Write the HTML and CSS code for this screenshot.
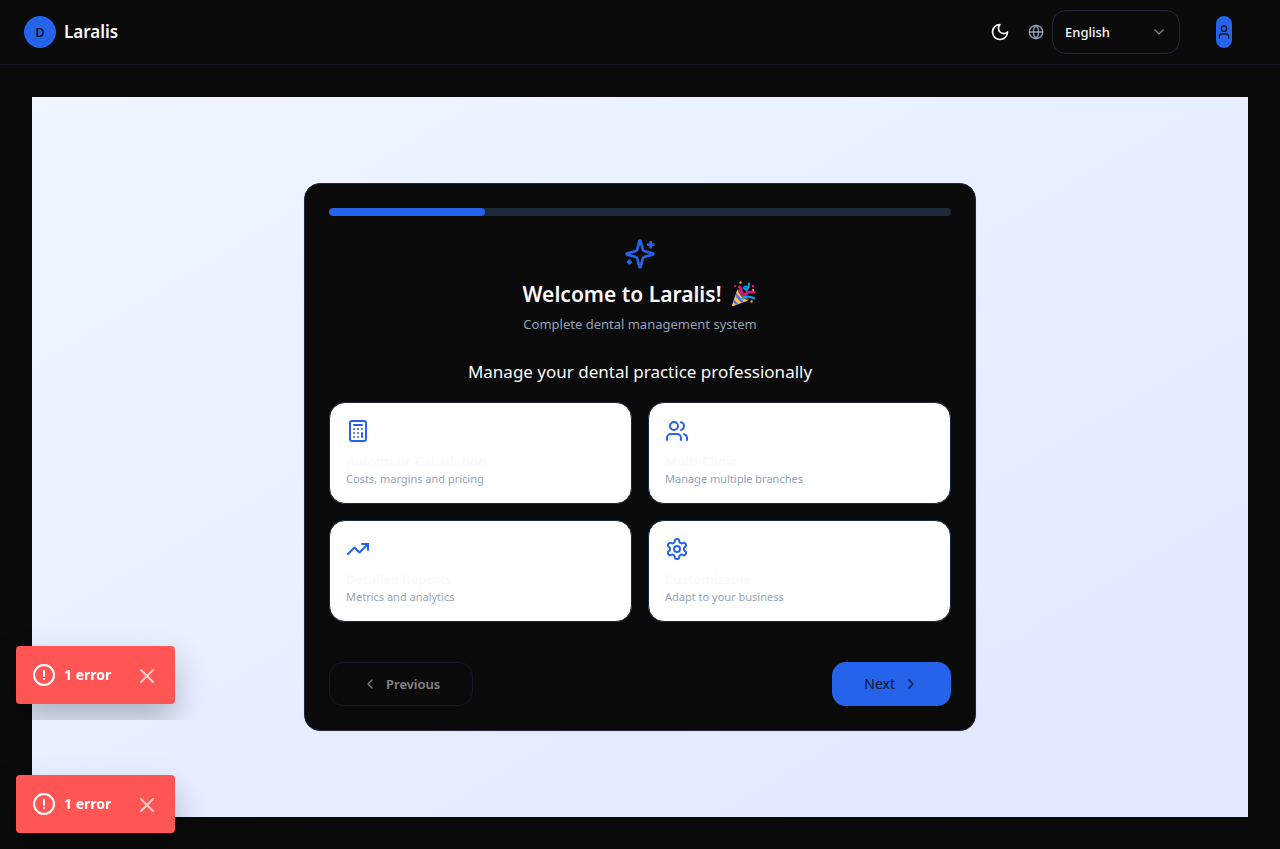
FILE: index.html
```html
<!DOCTYPE html>
<html lang="en">
<head>
<meta charset="utf-8">
<meta name="viewport" content="width=device-width, initial-scale=1">
<title>Laralis</title>
<link rel="stylesheet" href="styles.css">
</head>
<body>
<header class="topbar">
  <div class="brand">
    <span class="brand-mark">D</span>
    <span class="brand-name">Laralis</span>
  </div>
  <div class="tools">
    <button class="theme-toggle" type="button" aria-label="Toggle theme">
      <svg class="icon icon-sm" viewBox="0 0 24 24"><path d="M12 3a6 6 0 0 0 9 9 9 9 0 1 1-9-9Z"/></svg>
    </button>
    <div class="language">
      <svg class="icon globe" viewBox="0 0 24 24"><circle cx="12" cy="12" r="10"/><path d="M12 2a14.5 14.5 0 0 0 0 20 14.5 14.5 0 0 0 0-20"/><path d="M2 12h20"/></svg>
      <div class="select-wrap">
        <select class="select" aria-label="Language"><option>English</option><option>Español</option></select>
        <svg class="icon chevron" viewBox="0 0 24 24"><path d="m6 9 6 6 6-6"/></svg>
      </div>
    </div>
    <button class="avatar" type="button" aria-label="Account">
      <svg class="icon" viewBox="0 0 24 24"><path d="M19 21v-2a4 4 0 0 0-4-4H9a4 4 0 0 0-4 4v2"/><circle cx="12" cy="7" r="4"/></svg>
    </button>
  </div>
</header>

<main class="page">
  <div class="stage">
    <section class="wizard">
      <div class="progress" role="progressbar" aria-label="Setup progress" aria-valuenow="25" aria-valuemin="0" aria-valuemax="100"><div class="progress-bar" style="width:25%"></div></div>
      <div class="intro">
        <svg class="icon icon-lg" viewBox="0 0 24 24"><path d="M9.937 15.5A2 2 0 0 0 8.5 14.063l-6.135-1.582a.5.5 0 0 1 0-.962L8.5 9.936A2 2 0 0 0 9.937 8.5l1.582-6.135a.5.5 0 0 1 .963 0L14.063 8.5A2 2 0 0 0 15.5 9.937l6.135 1.581a.5.5 0 0 1 0 .964L15.5 14.063a2 2 0 0 0-1.437 1.437l-1.582 6.135a.5.5 0 0 1-.963 0z"/><path d="M20 3v4"/><path d="M22 5h-4"/><path d="M4 17v2"/><path d="M5 18H3"/></svg>
        <h1 class="title">Welcome to Laralis!
          <svg class="party" viewBox="0 0 26 26" role="img" aria-label="Party popper">
            <path d="M7 8c4 1 9 5 11 11l-4 2L5 12z" fill="#7d4533"/>
            <path d="M6.500 8.500 1 24c0 1 .6 1.300 1.500 1L17 19.500C12 18 8 14 6.500 8.500z" fill="#ffc83d"/>
            <path d="m5.200 12 7.800 9-2.600 1-6.300-7zM3 18.500l4.500 4.700-2.500.900-3-3.300z" fill="#5b6cf0"/>
            <path d="M7.500 5.500c3 1 3.500 4 2.500 8" fill="none" stroke="#f70a8d" stroke-width="2.400"/>
            <path d="M18.500 1.500c-1 1.500 0 3-1 5-1 2.500-4 2.500-4.500.5-.3-2 3-2.500 3.300 0 .2 1.500-.5 2.500-1.500 3.500" fill="none" stroke="#00a6ed" stroke-width="1.800"/>
            <path d="M13.500 14.500c2-3 5-5 11-2.500" fill="none" stroke="#f70a8d" stroke-width="2.200"/>
            <path d="M11 18c3-4 8-2.500 13-.500" fill="none" stroke="#00a6ed" stroke-width="2.400"/>
            <g fill="#ffb02e"><circle cx="9.500" cy="1.500" r="1.200"/><circle cx="22" cy="9" r="1.100"/><circle cx="20.500" cy="20.500" r="1.200"/></g>
            <g fill="#f70a8d"><circle cx="4" cy="5" r="1"/><circle cx="22" cy="5" r="1.200"/></g>
          </svg>
        </h1>
        <p class="subtitle">Complete dental management system</p>
      </div>
      <h2 class="lead">Manage your dental practice professionally</h2>
      <div class="features">
        <article class="feature">
          <svg class="icon icon-md" viewBox="0 0 24 24"><rect width="16" height="20" x="4" y="2" rx="2"/><path d="M8 6h8M16 14v4M16 10h.01M12 10h.01M8 10h.01M12 14h.01M8 14h.01M12 18h.01M8 18h.01"/></svg>
          <h3 class="feature-name">Automatic Calculation</h3>
          <p class="feature-text">Costs, margins and pricing</p>
        </article>
        <article class="feature">
          <svg class="icon icon-md" viewBox="0 0 24 24"><path d="M16 21v-2a4 4 0 0 0-4-4H6a4 4 0 0 0-4 4v2"/><circle cx="9" cy="7" r="4"/><path d="M22 21v-2a4 4 0 0 0-3-3.870M16 3.130a4 4 0 0 1 0 7.750"/></svg>
          <h3 class="feature-name">Multi-Clinic</h3>
          <p class="feature-text">Manage multiple branches</p>
        </article>
        <article class="feature">
          <svg class="icon icon-md" viewBox="0 0 24 24"><path d="m22 7-8.500 8.500-5-5L2 17"/><path d="M16 7h6v6"/></svg>
          <h3 class="feature-name">Detailed Reports</h3>
          <p class="feature-text">Metrics and analytics</p>
        </article>
        <article class="feature">
          <svg class="icon icon-md" viewBox="0 0 24 24"><path d="M12.220 2h-.440a2 2 0 0 0-2 2v.180a2 2 0 0 1-1 1.730l-.430.250a2 2 0 0 1-2 0l-.150-.080a2 2 0 0 0-2.730.730l-.220.380a2 2 0 0 0 .730 2.730l.150.100a2 2 0 0 1 1 1.720v.510a2 2 0 0 1-1 1.740l-.150.090a2 2 0 0 0-.730 2.730l.220.380a2 2 0 0 0 2.730.730l.150-.080a2 2 0 0 1 2 0l.430.250a2 2 0 0 1 1 1.730V20a2 2 0 0 0 2 2h.440a2 2 0 0 0 2-2v-.180a2 2 0 0 1 1-1.730l.430-.250a2 2 0 0 1 2 0l.150.080a2 2 0 0 0 2.730-.730l.220-.390a2 2 0 0 0-.730-2.730l-.150-.080a2 2 0 0 1-1-1.740v-.500a2 2 0 0 1 1-1.740l.150-.090a2 2 0 0 0 .730-2.730l-.220-.380a2 2 0 0 0-2.730-.730l-.150.080a2 2 0 0 1-2 0l-.430-.250a2 2 0 0 1-1-1.730V4a2 2 0 0 0-2-2z"/><circle cx="12" cy="12" r="3"/></svg>
          <h3 class="feature-name">Customizable</h3>
          <p class="feature-text">Adapt to your business</p>
        </article>
      </div>
      <div class="actions">
        <button class="btn btn-outline" type="button" disabled><svg class="icon" viewBox="0 0 24 24"><path d="m15 18-6-6 6-6"/></svg>Previous</button>
        <button class="btn btn-primary" type="button">Next<svg class="icon" viewBox="0 0 24 24"><path d="m9 18 6-6-6-6"/></svg></button>
      </div>
    </section>
  </div>
</main>

<div class="toast-layer toast-layer-clipped">
  <div class="toast" role="alert">
    <svg class="icon icon-alert" viewBox="0 0 24 24"><circle cx="12" cy="12" r="10"/><path d="M12 8v5M12 16h.01"/></svg>
    <span class="toast-text">1 error</span>
    <button class="toast-close" type="button" aria-label="Close"><svg class="icon" viewBox="0 0 24 24"><path d="M6 7l12 12M18 7 6 19"/></svg></button>
  </div>
</div>
<div class="toast-layer">
  <div class="toast" role="alert">
    <svg class="icon icon-alert" viewBox="0 0 24 24"><circle cx="12" cy="12" r="10"/><path d="M12 8v5M12 16h.01"/></svg>
    <span class="toast-text">1 error</span>
    <button class="toast-close" type="button" aria-label="Close"><svg class="icon" viewBox="0 0 24 24"><path d="M6 7l12 12M18 7 6 19"/></svg></button>
  </div>
</div>
</body>
</html>
```
FILE: styles.css
```css
* { box-sizing: border-box; }
body {
  margin: 0;
  min-height: 100vh;
  background: #0a0a0a;
  color: #fafafa;
  font-family: "Noto Sans", "Open Sans", sans-serif;
  font-size: 13px;
  line-height: 20px;
}
h1, h2, h3, p { margin: 0; }
button, select { font: inherit; color: inherit; }
button { border: 0; padding: 0; background: none; }

.icon {
  display: block;
  flex: none;
  width: 16px;
  height: 16px;
  fill: none;
  stroke: currentColor;
  stroke-width: 2;
  stroke-linecap: round;
  stroke-linejoin: round;
}
.icon-sm { width: 20px; height: 20px; }
.icon-md { width: 24px; height: 24px; color: #2563eb; }
.icon-lg { width: 32px; height: 32px; color: #2563eb; }

.topbar {
  display: flex;
  align-items: center;
  justify-content: space-between;
  height: 65px;
  padding: 0 48px 0 24px;
  border-bottom: 1px solid #131a26;
}
.brand { display: flex; align-items: center; gap: 8px; }
.brand-mark {
  display: grid;
  place-items: center;
  width: 32px;
  height: 32px;
  border-radius: 50%;
  background: #2563eb;
  color: #0f172a;
  font-weight: 600;
}
.brand-name { font-size: 17px; line-height: 24px; font-weight: 600; }
.tools { display: flex; align-items: center; }
.theme-toggle { margin-right: 18px; }
.language { display: flex; align-items: center; gap: 8px; margin-right: 36px; }
.globe { color: #94a3b8; }
.select-wrap { position: relative; }
.select {
  display: block;
  width: 128px;
  height: 44px;
  padding: 0 12px;
  border: 1px solid #1e293b;
  border-radius: 14px;
  background: #0a0a0a;
  font-weight: 500;
  appearance: none;
}
.chevron { position: absolute; top: 14px; right: 13px; opacity: .5; pointer-events: none; }
.avatar {
  display: grid;
  place-items: center;
  width: 16px;
  height: 32px;
  border-radius: 8px;
  background: #2563eb;
  color: #0f172a;
}

.page { padding: 32px; }
.stage {
  display: grid;
  place-items: center;
  min-height: 720px;
  padding: 16px;
  background: linear-gradient(to bottom right, #eff6ff, #e0e7ff);
}
.wizard {
  width: 100%;
  max-width: 672px;
  padding: 24px;
  border: 1px solid #1e293b;
  border-radius: 16px;
  background: #0a0a0a;
  box-shadow: 0 1px 2px rgba(0, 0, 0, .05);
}
.progress { height: 8px; border-radius: 4px; background: #1e293b; overflow: hidden; }
.progress-bar { height: 100%; border-radius: 4px; background: #2563eb; }
.intro {
  display: flex;
  flex-direction: column;
  align-items: center;
  padding-top: 22px;
  text-align: center;
}
.title {
  display: flex;
  align-items: center;
  gap: 10px;
  margin-top: 8px;
  font-size: 21px;
  line-height: 32px;
  font-weight: 600;
}
.party { width: 26px; height: 26px; }
.subtitle { margin-top: 4px; color: #94a3b8; }
.lead {
  margin-top: 24px;
  text-align: center;
  font-size: 17px;
  line-height: 28px;
  font-weight: 400;
}
.features {
  display: grid;
  grid-template-columns: 1fr 1fr;
  gap: 16px;
  margin-top: 16px;
}
.feature {
  padding: 16px;
  border: 1px solid #1e293b;
  border-radius: 16px;
  background: #fff;
}
.feature-name { margin-top: 8px; color: #fafafa; font-size: 13px; font-weight: 600; }
.feature-text { color: #94a3b8; font-size: 11px; line-height: 16px; }
.actions { display: flex; justify-content: space-between; margin-top: 40px; }
.btn {
  display: flex;
  align-items: center;
  gap: 8px;
  height: 44px;
  padding: 0 32px;
  border-radius: 14px;
}
.btn-outline { border: 1px solid #1e293b; opacity: .5; font-weight: 600; }
.btn-primary { background: #2563eb; color: #0f172a; font-size: 14px; }

.toast-layer {
  position: fixed;
  inset: 0;
  display: flex;
  align-items: flex-end;
  padding: 16px;
  pointer-events: none;
}
.toast-layer-clipped { bottom: auto; height: 720px; overflow: hidden; }
.toast {
  display: flex;
  align-items: center;
  gap: 8px;
  height: 58px;
  padding: 0 16px;
  border-radius: 4px;
  background: #ff5555;
  color: #fff;
  box-shadow: 0 16px 32px rgba(0, 0, 0, .25);
  pointer-events: auto;
}
.icon-alert { width: 24px; height: 24px; }
.toast-text { font-size: 14px; font-weight: 700; }
.toast-close { margin-left: 16px; opacity: .7; }
.toast-close .icon { width: 24px; height: 24px; }
```
